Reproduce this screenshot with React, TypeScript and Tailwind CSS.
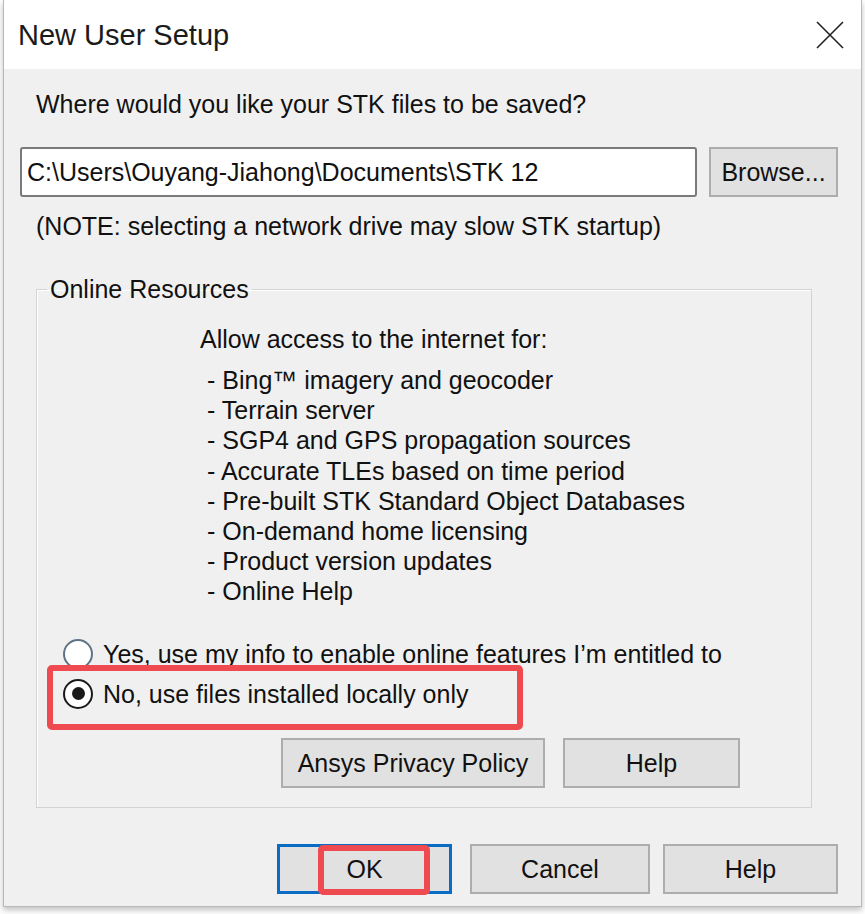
import { useState } from "react";

const items = [
  "Bing™ imagery and geocoder",
  "Terrain server",
  "SGP4 and GPS propagation sources",
  "Accurate TLEs based on time period",
  "Pre-built STK Standard Object Databases",
  "On-demand home licensing",
  "Product version updates",
  "Online Help",
];

function Radio({ checked }: { checked: boolean }) {
  return (
    <span
      className={`flex h-[30px] w-[30px] shrink-0 items-center justify-center rounded-full border-2 bg-white ${
        checked ? "border-[#1a1a1a]" : "border-[#5f7384]"
      }`}
    >
      {checked && <span className="h-[13px] w-[13px] rounded-full bg-[#1a1a1a]" />}
    </span>
  );
}

export default function App() {
  const [online, setOnline] = useState(false);

  return (
    <div className="h-[914px] w-[865px] overflow-hidden bg-white font-['Liberation_Sans',Arial,sans-serif] text-[#111]">
      <div className="ml-[3px] w-[859px] border-x border-b border-[#b9b9b9] shadow-[0_3px_6px_rgba(0,0,0,0.25)]">
        {/* title bar */}
        <div className="flex h-[69px] items-center justify-between bg-white pl-[14px] pr-[17px]">
          <span className="text-[29px] leading-[34px] text-[#1b1b1b]">New User Setup</span>
          <svg width="28" height="28" viewBox="0 0 28 28" className="text-[#222]">
            <path d="M1 1 L27 27 M27 1 L1 27" stroke="currentColor" strokeWidth="1.6" />
          </svg>
        </div>

        {/* body */}
        <div className="bg-[#f0f0f0] pb-[12px] pl-[16px] pr-[23px] pt-[20px] text-[25px] leading-[30px]">
          <p className="pl-[16px]">Where would you like your STK files to be saved?</p>

          <div className="mt-[28px] flex items-center">
            <div className="flex h-[50px] w-[677px] items-center rounded-[3px] border-2 border-[#7a7a7a] bg-white pl-[5px]">
              C:\Users\Ouyang-Jiahong\Documents\STK 12
            </div>
            <button className="ml-[12px] h-[50px] flex-1 border-2 border-[#adadad] bg-[#e1e1e1]">Browse...</button>
          </div>

          <p className="mt-[14px] pl-[16px]">(NOTE: selecting a network drive may slow STK startup)</p>

          <fieldset className="ml-[16px] mt-[33px] w-[776px] border border-[#d3d3d3] shadow-[inset_1px_1px_0_#fff]">
            <legend className="ml-[10px] px-[3px]">Online Resources</legend>
            <div className="pb-[19px]">
              <div className="pl-[163px] pt-[20px]">
                <p>Allow access to the internet for:</p>
                <ul className="mt-[11px] pl-[7px]">
                  {items.map((t) => (
                    <li key={t} className="leading-[30.2px]">
                      - {t}
                    </li>
                  ))}
                </ul>
              </div>

              <div className="mt-[27px] pl-[26px]">
                <label className="flex h-[40px] items-center gap-[10px]" onClick={() => setOnline(true)}>
                  <Radio checked={online} />
                  <span>Yes, use my info to enable online features I’m entitled to</span>
                </label>
                <div className="relative">
                  <label className="flex h-[40px] items-center gap-[10px]" onClick={() => setOnline(false)}>
                    <Radio checked={!online} />
                    <span>No, use files installed locally only</span>
                  </label>
                  <div className="pointer-events-none absolute left-[-16px] top-[-9px] h-[65px] w-[476px] rounded-[5px] border-[6px] border-[#ef4a4f]" />
                </div>
              </div>

              <div className="mt-[24px] flex gap-[18px] pl-[244px]">
                <button className="h-[50px] w-[264px] border-2 border-[#adadad] bg-[#e1e1e1]">Ansys Privacy Policy</button>
                <button className="h-[50px] w-[177px] border-2 border-[#adadad] bg-[#e1e1e1]">Help</button>
              </div>
            </div>
          </fieldset>

          <div className="mt-[36px] flex justify-end">
            <button className="relative h-[50px] w-[175px] border-[3px] border-[#0a6cc4] bg-[#e1e1e1]">
              OK
              <span className="pointer-events-none absolute left-[38px] top-[-2px] h-[50px] w-[112px] rounded-[5px] border-[6px] border-[#ef4a4f]" />
            </button>
            <button className="ml-[18px] h-[50px] w-[180px] border-2 border-[#adadad] bg-[#e1e1e1]">Cancel</button>
            <button className="ml-[13px] h-[50px] w-[175px] border-2 border-[#adadad] bg-[#e1e1e1]">Help</button>
          </div>
        </div>
      </div>
    </div>
  );
}
